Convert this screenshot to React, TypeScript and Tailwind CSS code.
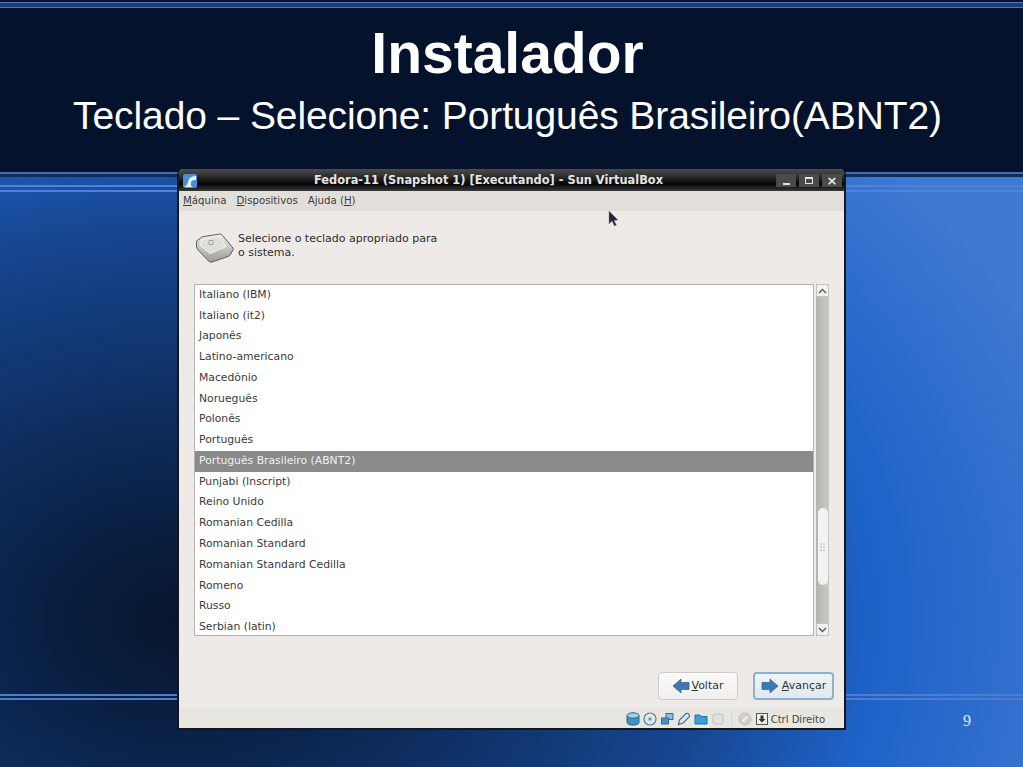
const LAYOUTS = [
  "Italiano (IBM)",
  "Italiano (it2)",
  "Japonês",
  "Latino-americano",
  "Macedônio",
  "Norueguês",
  "Polonês",
  "Português",
  "Português Brasileiro (ABNT2)",
  "Punjabi (Inscript)",
  "Reino Unido",
  "Romanian Cedilla",
  "Romanian Standard",
  "Romanian Standard Cedilla",
  "Romeno",
  "Russo",
  "Serbian (latin)",
];

function KeyIcon() {
  return (
    <svg width="40" height="32" viewBox="0 0 40 32" className="shrink-0">
      <defs>
        <linearGradient id="keyside" x1="0" y1="0" x2="0" y2="1">
          <stop offset="0" stopColor="#f0efed" />
          <stop offset="1" stopColor="#9c9b98" />
        </linearGradient>
      </defs>
      <path d="M1.5 9 L7 5 Q8 4.5 9 4.5 L25 2 Q26.5 2 27.5 3.5 L38 16 Q38.5 17 38 18 L35 23 Q34.5 24 33 24.5 L17 30 Q15.5 30.5 14 29.5 L3.5 18.5 Q2 17 1.5 15Z" fill="url(#keyside)" stroke="#5f5f5d" strokeWidth="1" />
      <path d="M7 7.5 L24 4.5 L31 14.5 L15 21.5 L5.5 13.5Z" fill="#dededb" stroke="#f4f4f2" strokeWidth="1" />
      <path d="M14 8.5 h4 v4 h-4z" fill="none" stroke="#a4a4a2" strokeWidth="1" />
    </svg>
  );
}

function ArrowIcon({ left }: { left?: boolean }) {
  return (
    <svg width="18" height="16" viewBox="0 0 18 16" className={left ? "shrink-0" : "shrink-0 rotate-180"}>
      <path d="M1 8 L9 1 V4.5 H17 V11.5 H9 V15Z" fill="#3f77b3" stroke="#2f5f94" strokeWidth="0.7" />
    </svg>
  );
}

function StatusIcons() {
  return (
    <div className="flex items-center gap-[3px]">
      <svg width="14" height="14" viewBox="0 0 14 14">
        <path d="M1 3.5 V10.5 C1 14 13 14 13 10.5 V3.5Z" fill="#3f93bd" stroke="#27688c" />
        <ellipse cx="7" cy="3.5" rx="6" ry="2.7" fill="#9ed3e8" stroke="#27688c" />
      </svg>
      <svg width="14" height="14" viewBox="0 0 14 14">
        <circle cx="7" cy="7" r="6" fill="#e3e7ea" stroke="#5a7f9c" strokeWidth="1.2" />
        <circle cx="7" cy="7" r="1.8" fill="#6d9cc0" />
      </svg>
      <svg width="14" height="14" viewBox="0 0 14 14">
        <rect x="6" y="1.5" width="7" height="6" fill="#8fbde0" stroke="#2f6d9e" />
        <rect x="1.5" y="6" width="7" height="6" fill="#4f8fc4" stroke="#2f6d9e" />
      </svg>
      <svg width="14" height="14" viewBox="0 0 14 14">
        <path d="M1.5 12.5 L2.5 8 L9 1.5 Q12.5 0.5 12.5 4.5 L6 11Z" fill="#dfe8f0" stroke="#46709a" strokeWidth="1.2" />
      </svg>
      <svg width="14" height="14" viewBox="0 0 14 14">
        <path d="M1 3 H6 L7 4.5 H13 V12 H1Z" fill="#35a0dc" stroke="#27719f" />
      </svg>
      <svg width="14" height="14" viewBox="0 0 14 14">
        <rect x="2" y="2" width="10" height="10" rx="2" fill="#e2e1dd" stroke="#c0bfbb" />
      </svg>
      <div className="mx-[3px] h-[14px] w-px bg-[#d6d4cf]" />
      <svg width="14" height="14" viewBox="0 0 14 14">
        <circle cx="7" cy="7" r="6" fill="#cfcfcb" stroke="#bcbcb8" />
        <path d="M4.5 9.5 L9.5 4.5" stroke="#eeeeea" strokeWidth="2.4" />
      </svg>
      <svg width="14" height="14" viewBox="0 0 14 14">
        <rect x="1.5" y="1.5" width="11" height="11" fill="#f2f0e4" stroke="#55534e" />
        <path d="M5.5 3.5 H8.5 V7 H10.5 L7 10.5 L3.5 7 H5.5Z" fill="#33312e" />
      </svg>
    </div>
  );
}

function Window() {
  return (
    <div className="ml-[177px] -mt-[3px] flex h-[561px] w-[669px] flex-col overflow-hidden rounded-t-[6px] border-x-2 border-b-2 border-[#14181c] bg-[#edeae8] font-['DejaVu_Sans',sans-serif]">
      <div className="relative flex h-[22px] shrink-0 items-center justify-center bg-[linear-gradient(#4c4c4c_0%,#333_28%,#050505_68%,#2b2b2b_92%,#3a3a3a_100%)] pt-[2px]">
        <svg width="14" height="14" viewBox="0 0 14 14" className="absolute left-[4px] top-[5px]">
          <rect width="14" height="14" rx="2" fill="#4a8ed8" />
          <path d="M13 2 Q6 2 5 8 Q4 12 1 13 L9 13 Q7 11 8 8 Q9 5.5 13 6Z" fill="#eaf4ff" />
        </svg>
        <span className="ml-[-46px] text-[11.4px] font-bold text-[#e4e4e4]">
          Fedora-11 (Snapshot 1) [Executando] - Sun VirtualBox
        </span>
        <div className="absolute right-[2px] top-[5px] flex gap-[3px]">
          <div className="flex h-[13px] w-[20px] items-end justify-center bg-[#4a4a4a] pb-[2px]">
            <div className="h-[2px] w-[7px] bg-[#e4e4e4]" />
          </div>
          <div className="flex h-[13px] w-[20px] items-center justify-center bg-[#4a4a4a]">
            <div className="h-[7px] w-[8px] border border-t-2 border-[#e4e4e4]" />
          </div>
          <div className="flex h-[13px] w-[20px] items-center justify-center bg-[#4a4a4a] text-[13px] font-bold leading-none text-[#efefef]">
            ×
          </div>
        </div>
      </div>

      <div className="flex h-[20px] shrink-0 items-center gap-[10px] bg-[#e2dfda] pl-[4px] text-[10.2px] text-[#3b3b3b]">
        <span><u>M</u>áquina</span>
        <span><u>D</u>ispositivos</span>
        <span>Ajuda (<u>H</u>)</span>
      </div>

      <div className="relative flex min-h-0 flex-1 flex-col px-[15px]">
        <div className="flex h-[73px] items-start pl-px pt-[21px]">
          <KeyIcon />
          <p className="ml-[3px] w-[205px] text-[11px] leading-[14px] text-[#2e2e2e]">
            Selecione o teclado apropriado para o sistema.
          </p>
        </div>

        <div className="flex h-[352px] gap-[2px]">
          <div className="flex h-full w-[621px] flex-col overflow-hidden border border-[#b5b2ae] bg-white">
            {LAYOUTS.map((l) => (
              <div
                key={l}
                className={
                  l === "Português Brasileiro (ABNT2)"
                    ? "flex h-[20.78px] shrink-0 items-center bg-[#8a8a8a] pb-[1px] pl-[4px] text-[10.8px] text-[#f0f0f0]"
                    : "flex h-[20.78px] shrink-0 items-center pb-[1px] pl-[4px] text-[10.8px] text-[#3a3a3a]"
                }
              >
                {l}
              </div>
            ))}
          </div>

          <div className="flex h-full w-[13px] flex-col bg-[linear-gradient(90deg,#b5b3b0,#cbc9c6)]">
            <div className="flex h-[13px] items-center justify-center rounded-t-[2px] border border-[#c4c2be] bg-[#f2f1ef]">
              <svg width="9" height="6" viewBox="0 0 9 6">
                <path d="M1 5 L4.5 1.5 L8 5" fill="none" stroke="#5b5b5b" strokeWidth="1.4" />
              </svg>
            </div>
            <div className="mx-[1.5px] mt-[211px] flex h-[77px] flex-col items-center justify-center rounded-[5px] bg-[#f3f2f1]">
              <div className="grid grid-cols-2 gap-[1px]">
                {[0, 1, 2, 3, 4, 5].map((i) => (
                  <div key={i} className="h-[2px] w-[2px] bg-[#d6d4d1]" />
                ))}
              </div>
            </div>
            <div className="flex-1" />
            <div className="flex h-[13px] items-center justify-center rounded-b-[2px] border border-[#c4c2be] bg-[#f2f1ef]">
              <svg width="9" height="6" viewBox="0 0 9 6">
                <path d="M1 1 L4.5 4.5 L8 1" fill="none" stroke="#5b5b5b" strokeWidth="1.4" />
              </svg>
            </div>
          </div>
        </div>

        <div className="-mr-[5px] mt-[36px] flex justify-end gap-[15px]">
          <button className="flex h-[28px] w-[80px] items-center justify-center gap-[1px] rounded-[4px] border border-[#d0cdc9] bg-[linear-gradient(#fbfbfa,#f0efed)] text-[11px] text-[#333]">
            <ArrowIcon left />
            <span><u>V</u>oltar</span>
          </button>
          <button className="flex h-[28px] w-[81px] items-center justify-center gap-[3px] rounded-[4px] border-2 border-[#8fb2cc] bg-[linear-gradient(#eef4f8,#dfe9f0)] text-[11px] text-[#333]">
            <ArrowIcon />
            <span><u>A</u>vançar</span>
          </button>
        </div>

        <svg width="14" height="20" viewBox="0 0 14 20" className="absolute left-[428px] top-[-1px]">
          <path d="M2 1 L2 14 L5 11 L7.5 16 L9.5 15 L7 10.5 L11 10Z" fill="#23233c" stroke="#8d8d94" strokeWidth="0.5" />
        </svg>
      </div>

      <div className="flex h-[20px] shrink-0 items-center justify-end bg-[#e8e6e1] pr-[19px] pt-[2px]">
        <StatusIcons />
        <span className="ml-[2px] text-[10px] text-[#454545]">Ctrl Direito</span>
      </div>
    </div>
  );
}

export default function App() {
  return (
    <div className="relative h-[767px] w-[1023px] overflow-hidden bg-[radial-gradient(ellipse_760px_560px_at_180px_620px,#07152c_0%,#0b2650_28%,#174690_70%,#1a55ad_82%,#1e62c8_92%,#3f7ad2_125%)] font-['Liberation_Sans',sans-serif]">
      {/* stripes behind the window */}
      <div className="absolute inset-x-0 top-[172px] h-[2px] bg-[#4a6aa8]" />
      <div className="absolute inset-x-0 top-[174px] h-[3px] bg-[#0e2c64]" />
      <div className="absolute inset-x-0 top-[185px] h-[2px] bg-[#4f82d8]" />
      <div className="absolute inset-x-0 top-[190px] h-[2px] bg-[#4f82d8]" />
      <div className="absolute inset-x-0 top-[694px] h-[2px] bg-[#4d7cd0]" />
      <div className="absolute inset-x-0 top-[698px] h-[2px] bg-[#4d7cd0]" />

      <header className="relative flex h-[172px] flex-col items-center bg-[#04122b] pr-[8px] text-white">
        <div className="absolute inset-x-0 top-[2px] h-[6px] border-y border-y-[#4a78c4] bg-[#1a3c78]" />
        <h1 className="pt-[22px] text-[57px] font-bold leading-[62px]">Instalador</h1>
        <p className="mt-[10px] text-[39px] leading-[44px] tracking-[-0.1px]">
          Teclado – Selecione: Português Brasileiro(ABNT2)
        </p>
      </header>

      <div className="relative">
        <Window />
      </div>

      <span className="absolute left-[963px] top-[709px] font-['Liberation_Serif',serif] text-[16px] text-[#e4eeff]">
        9
      </span>
    </div>
  );
}
